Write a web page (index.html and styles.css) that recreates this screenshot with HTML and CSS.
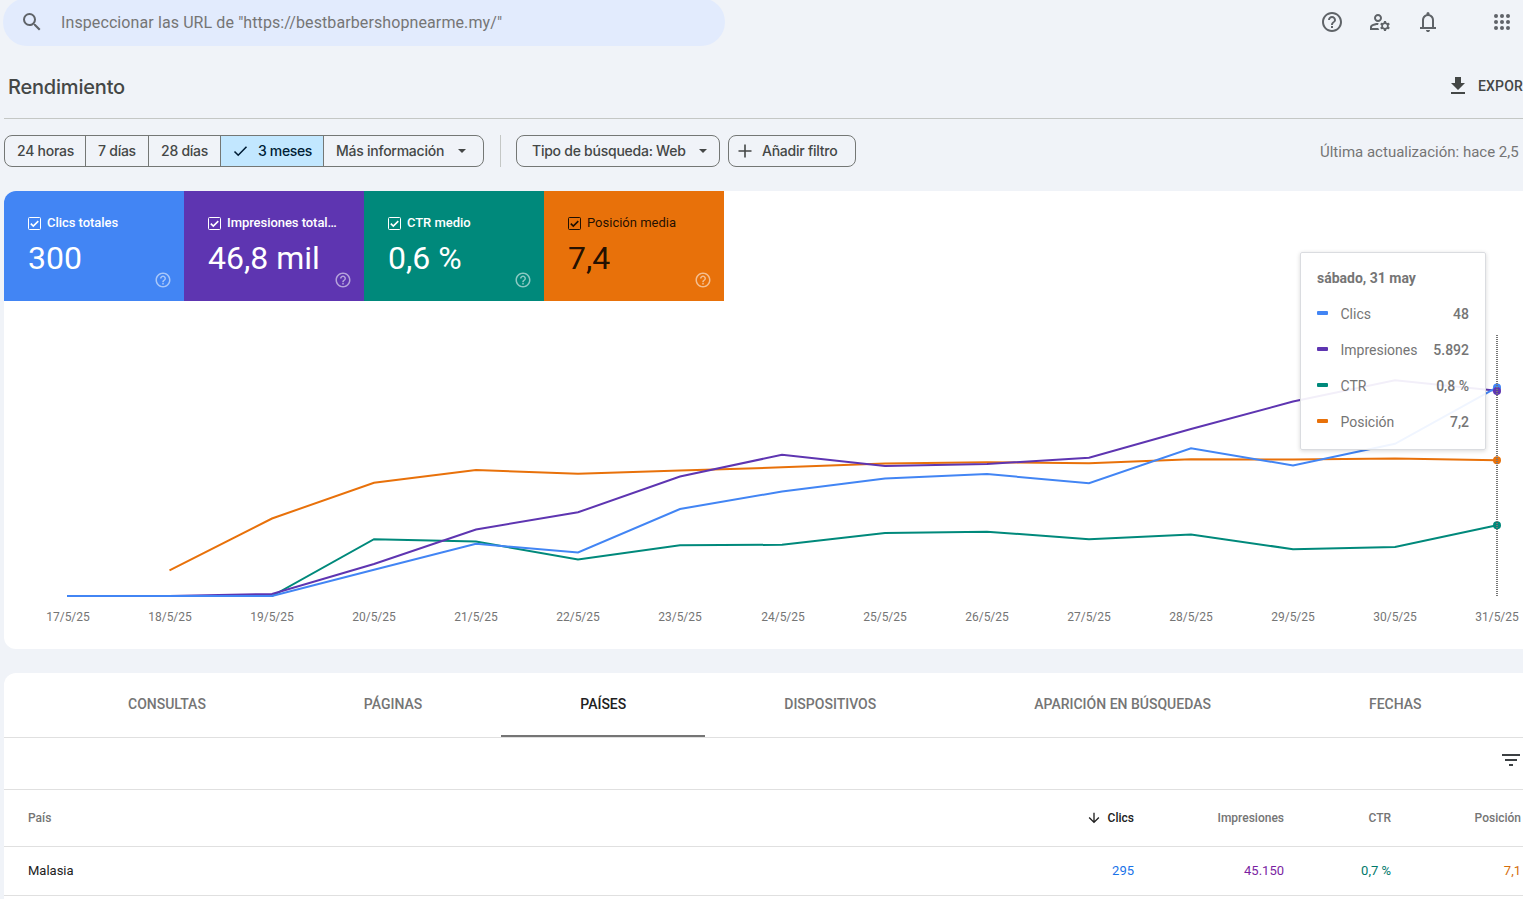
FILE: index.html
```html
<!DOCTYPE html>
<html lang="es">
<head>
<meta charset="utf-8">
<title>Rendimiento</title>
<link rel="stylesheet" href="styles.css">
</head>
<body>
<svg class="defs" aria-hidden="true">
  <symbol id="help" viewBox="0 0 24 24"><path d="M11 18h2v-2h-2v2zm1-16C6.48 2 2 6.48 2 12s4.48 10 10 10 10-4.48 10-10S17.52 2 12 2zm0 18c-4.41 0-8-3.59-8-8s3.59-8 8-8 8 3.59 8 8-3.59 8-8 8zm0-14c-2.21 0-4 1.79-4 4h2c0-1.1.9-2 2-2s2 .9 2 2c0 2-3 1.75-3 5h2c0-2.25 3-2.5 3-5 0-2.21-1.79-4-4-4z"/></symbol>
  <symbol id="box" viewBox="0 0 13 13"><rect x=".5" y=".5" width="12" height="12" rx="1" fill="none" stroke="currentColor"/><path d="M2.8 6.6l2.5 2.5 5-5" fill="none" stroke="currentColor" stroke-width="1.6"/></symbol>
</svg>
<header class="topbar">
  <div class="search">
    <svg class="icon" viewBox="0 0 24 24"><path d="M15.5 14h-.79l-.28-.27A6.471 6.471 0 0 0 16 9.5 6.5 6.5 0 1 0 9.5 16c1.61 0 3.09-.59 4.23-1.57l.27.28v.79l5 4.99L20.49 19l-4.99-5zm-6 0C7.01 14 5 11.99 5 9.5S7.01 5 9.5 5 14 7.01 14 9.5 11.99 14 9.5 14z"/></svg>
    <span class="search-text">Inspeccionar las URL de "https://bestbarbershopnearme.my/"</span>
  </div>
  <nav class="actions">
    <svg class="icon"><use href="#help"/></svg>
    <svg class="icon" viewBox="0 0 24 24"><path d="M4 18v-.65c0-.34.16-.66.41-.81C6.1 15.53 8.03 15 10 15c.03 0 .05 0 .08.01.1-.7.3-1.37.59-1.98-.22-.02-.44-.03-.67-.03-2.42 0-4.68.67-6.61 1.82-.88.52-1.39 1.5-1.39 2.53V20h9.26c-.42-.6-.75-1.28-.97-2H4zM10 12c2.21 0 4-1.79 4-4s-1.79-4-4-4-4 1.79-4 4 1.79 4 4 4zm0-6c1.1 0 2 .9 2 2s-.9 2-2 2-2-.9-2-2 .9-2 2-2zM20.75 16c0-.22-.03-.42-.06-.63l1.14-1.01-1-1.73-1.45.49c-.32-.27-.68-.48-1.08-.63L18 11h-2l-.3 1.49c-.4.15-.76.36-1.08.63l-1.45-.49-1 1.73 1.14 1.01c-.03.21-.06.41-.06.63s.03.42.06.63l-1.14 1.01 1 1.73 1.45-.49c.32.27.68.48 1.08.63L16 21h2l.3-1.49c.4-.15.76-.36 1.08-.63l1.45.49 1-1.73-1.14-1.01c.03-.21.06-.41.06-.63zM17 18c-1.1 0-2-.9-2-2s.9-2 2-2 2 .9 2 2-.9 2-2 2z"/></svg>
    <svg class="icon" viewBox="0 -960 960 960"><path d="M160-200v-80h80v-280q0-83 50-147.5T420-792v-28q0-25 17.500-42.500T480-880q25 0 42.500 17.500T540-820v28q80 20 130 84.500T720-560v280h80v80H160Zm320 120q-33 0-56.500-23.500T400-160h160q0 33-23.500 56.500T480-80ZM320-280h320v-280q0-66-47-113t-113-47q-66 0-113 47t-47 113v280Z"/></svg>
    <svg class="icon apps" viewBox="0 0 24 24"><circle cx="6" cy="6" r="2"/><circle cx="12" cy="6" r="2"/><circle cx="18" cy="6" r="2"/><circle cx="6" cy="12" r="2"/><circle cx="12" cy="12" r="2"/><circle cx="18" cy="12" r="2"/><circle cx="6" cy="18" r="2"/><circle cx="12" cy="18" r="2"/><circle cx="18" cy="18" r="2"/></svg>
  </nav>
</header>
<main class="page">
  <div class="title-row">
    <h1 class="title">Rendimiento</h1>
    <div class="export">
      <svg class="icon" viewBox="0 0 24 24"><path d="M19 9h-4V3H9v6H5l7 7 7-7zM5 18v2h14v-2H5z"/></svg>
      <span>EXPOR</span>
    </div>
  </div>
  <div class="filters">
    <div class="segments">
      <div class="seg seg-day">24 horas</div>
      <div class="seg seg-week">7 días</div>
      <div class="seg seg-month">28 días</div>
      <div class="seg seg-active"><svg class="check" viewBox="0 0 18 18"><path d="M2.500 9.500l3.700 3.700 8.300-8.400" fill="none" stroke="currentColor" stroke-width="1.600"/></svg>3 meses</div>
      <div class="seg seg-more">Más información<i class="caret"></i></div>
    </div>
    <div class="divider"></div>
    <div class="chip chip-type">Tipo de búsqueda: Web<i class="caret"></i></div>
    <div class="chip chip-add"><svg class="plus" viewBox="0 0 14 14"><path d="M7 .5v13M.5 7h13" stroke="currentColor" stroke-width="1.600"/></svg>Añadir filtro</div>
    <div class="updated">Última actualización: hace 2,5</div>
  </div>

  <section class="card chart-card">
    <div class="metrics">
      <div class="metric clicks"><div class="metric-name"><svg class="box"><use href="#box"/></svg>Clics totales</div><div class="metric-value">300</div><svg class="metric-help"><use href="#help"/></svg></div>
      <div class="metric impressions"><div class="metric-name"><svg class="box"><use href="#box"/></svg>Impresiones total…</div><div class="metric-value">46,8 mil</div><svg class="metric-help"><use href="#help"/></svg></div>
      <div class="metric ctr"><div class="metric-name"><svg class="box"><use href="#box"/></svg>CTR medio</div><div class="metric-value">0,6 %</div><svg class="metric-help"><use href="#help"/></svg></div>
      <div class="metric position"><div class="metric-name"><svg class="box"><use href="#box"/></svg>Posición media</div><div class="metric-value">7,4</div><svg class="metric-help"><use href="#help"/></svg></div>
    </div>
    <svg class="chart" viewBox="4 301 1519 348">
      <g fill="none" stroke-width="2">
        <path stroke="#e8710a" d="M169.500 570.300L272 518.500 374 482.700 476 470 578 473.800 680 470.600 782 467.300 885 463.400 987 462.300 1089 463.300 1191 459.200 1293 459.500 1395 458.600 1497 460.300"/>
        <path stroke="#00897b" d="M67 596H272L374 539.200 476 541.500 578 559.500 680 545.200 782 544.800 885 533 987 531.700 1089 539.200 1191 534.500 1293 549.200 1395 546.900 1497 525.200"/>
        <path stroke="#5e35b1" d="M67 596H169L272 594 374 564 476 529.500 578 512.300 680 476.500 782 454.800 885 466 987 464 1089 457.800 1191 429 1293 401.500 1395 380.300 1497 390.700"/>
        <path stroke="#4285f4" d="M67 596H272L374 569.800 476 543.700 578 552.500 680 509 782 491.500 885 478.500 987 474 1089 483.300 1191 448.200 1293 465.500 1395 443.800 1497 387.300"/>
      </g>
      <circle cx="1497" cy="387.500" r="4" fill="#4285f4"/>
      <circle cx="1497" cy="391" r="4" fill="#5e35b1"/>
      <circle cx="1497" cy="460.300" r="4" fill="#e8710a"/>
      <circle cx="1497" cy="525.200" r="4" fill="#00897b"/>
      <path d="M1497 335V596" stroke="#757575" stroke-width="2" stroke-dasharray="1 1"/>
      <g class="dates">
        <text x="68" y="621">17/5/25</text><text x="170" y="621">18/5/25</text><text x="272" y="621">19/5/25</text><text x="374" y="621">20/5/25</text><text x="476" y="621">21/5/25</text><text x="578" y="621">22/5/25</text><text x="680" y="621">23/5/25</text><text x="783" y="621">24/5/25</text><text x="885" y="621">25/5/25</text><text x="987" y="621">26/5/25</text><text x="1089" y="621">27/5/25</text><text x="1191" y="621">28/5/25</text><text x="1293" y="621">29/5/25</text><text x="1395" y="621">30/5/25</text><text x="1497" y="621">31/5/25</text>
      </g>
    </svg>
    <div class="tooltip">
      <div class="tip-title">sábado, 31 may</div>
      <div class="tip-row"><i class="dash clicks"></i>Clics<b>48</b></div>
      <div class="tip-row"><i class="dash impressions"></i>Impresiones<b>5.892</b></div>
      <div class="tip-row"><i class="dash ctr"></i>CTR<b>0,8 %</b></div>
      <div class="tip-row"><i class="dash position"></i>Posición<b>7,2</b></div>
    </div>
  </section>

  <section class="card table-card">
    <div class="tabs">
      <div class="tab">CONSULTAS</div>
      <div class="tab">PÁGINAS</div>
      <div class="tab tab-active">PAÍSES</div>
      <div class="tab">DISPOSITIVOS</div>
      <div class="tab">APARICIÓN EN BÚSQUEDAS</div>
      <div class="tab">FECHAS</div>
    </div>
    <div class="toolbar"><svg class="icon" viewBox="0 0 24 24"><path d="M10 18h4v-2h-4v2zM3 6v2h18V6H3zm3 7h12v-2H6v2z"/></svg></div>
    <div class="row head">
      <div>País</div>
      <div class="sorted"><svg class="arrow" viewBox="0 0 24 24"><path d="M20 12l-1.410-1.410L13 16.170V4h-2v12.170l-5.580-5.590L4 12l8 8 8-8z"/></svg>Clics</div>
      <div>Impresiones</div><div>CTR</div><div>Posición</div>
    </div>
    <div class="row data">
      <div>Malasia</div>
      <div class="v-clicks">295</div><div class="v-impressions">45.150</div><div class="v-ctr">0,7 %</div><div class="v-position">7,1</div>
    </div>
  </section>
</main>
</body>
</html>
```
FILE: styles.css
```css
* { box-sizing: border-box; }
body {
  margin: 0;
  height: 899px;
  overflow: hidden;
  background: #f0f3f8;
  font-family: Roboto, "Liberation Sans", sans-serif;
  color: #757575;
}
.defs { display: none; }
.icon { width: 24px; height: 24px; flex: none; fill: currentColor; }

.topbar { display: flex; justify-content: space-between; align-items: flex-end; height: 46px; padding-left: 3px; }
.search {
  display: flex; align-items: center; width: 722px; height: 48px; flex: none;
  padding: 0 17px; gap: 17px; border-radius: 24px; background: #e2ebfd; color: #5f6368;
}
.search-text { font-size: 16px; letter-spacing: .1px; color: #757575; }
.actions { display: flex; align-items: center; gap: 24px; height: 48px; padding-right: 9px; color: #5f6368; }
.apps { margin-left: 26px; }

.page { padding-left: 4px; }
.title-row {
  display: flex; justify-content: space-between; align-items: center;
  height: 73px; padding: 10px 0 0 4px; border-bottom: 1px solid #c4c7c5; color: #444746;
}
.title { margin: 0; font: 500 20px/24px Inter, sans-serif; letter-spacing: -0.2px; color: #444746; }
.export { display: flex; align-items: center; gap: 8px; width: 77px; flex: none; white-space: nowrap; font-size: 14px; font-weight: 500; letter-spacing: .15px; margin-top: -2px; }

.filters {
  display: flex; align-items: center; height: 72px; padding-bottom: 8px;
  font: 500 14px/20px Inter, sans-serif; letter-spacing: -.25px; color: #444746; white-space: nowrap;
}
.segments { display: flex; width: 480px; height: 32px; flex: none; border: 1px solid #747775; border-radius: 8px; overflow: hidden; }
.seg { display: flex; align-items: center; padding-left: 12px; border-right: 1px solid #747775; }
.seg-day { width: 81px; }
.seg-week { width: 63px; }
.seg-month { width: 72px; }
.seg-active { width: 103px; padding-left: 11px; gap: 8px; background: #c2e7ff; color: #001d35; letter-spacing: -.35px; }
.seg-more { flex: 1; border-right: 0; }
.check { width: 18px; height: 18px; }
.caret { margin-left: auto; border: 4.500px solid transparent; border-top-color: currentColor; border-bottom: 0; }
.seg-more .caret { margin-right: 17px; }
.divider { width: 1px; height: 32px; margin: 0 15px 0 16px; background: #c4c7c5; }
.chip { display: flex; align-items: center; height: 32px; flex: none; border: 1px solid #747775; border-radius: 8px; }
.chip-type { width: 204px; padding: 0 12px 0 15px; }
.chip-add { width: 128px; margin-left: 8px; padding-left: 9px; gap: 10px; }
.plus { width: 14px; height: 14px; }
.updated { width: 203px; flex: none; margin-left: auto; padding-top: 1px; font: 400 15px/20px Roboto, sans-serif; letter-spacing: 0; color: #757575; }

.card { background: #fff; border-radius: 12px 0 0 12px; }
.chart-card { position: relative; height: 458px; overflow: hidden; }
.clicks { background: #4285f4; }
.impressions { background: #5e35b1; }
.ctr { background: #00897b; }
.position { background: #e8710a; }
.metrics { display: flex; height: 110px; }
.metric { position: relative; width: 180px; padding: 23px 0 0 24px; color: #fff; }
.metric.position { color: rgba(0, 0, 0, .87); }
.metric-name { display: flex; align-items: center; gap: 6px; height: 16px; font-size: 13px; font-weight: 500; letter-spacing: -.05px; white-space: nowrap; }
.position .metric-name { font-weight: 400; letter-spacing: 0; }
.box { width: 13px; height: 13px; margin-top: 3px; }
.metric-value { margin-top: 9px; font-size: 32px; line-height: 38px; }
.metric-help { position: absolute; right: 12px; bottom: 12px; width: 18px; height: 18px; fill: #fff; opacity: .54; }
.chart { display: block; width: 1519px; height: 348px; }
.dates { font-size: 12px; fill: #757575; text-anchor: middle; }

.tooltip {
  position: absolute; left: 1296px; top: 61px; width: 186px; height: 198px;
  padding: 7px 16px; border: 1px solid #dadce0; border-radius: 2px;
  background: rgba(255, 255, 255, .92); box-shadow: 0 1px 4px rgba(0, 0, 0, .16); font-size: 14px;
}
.tip-title { line-height: 36px; font-weight: 700; }
.tip-row { display: flex; align-items: center; height: 36px; }
.tip-row b { margin-left: auto; font-weight: 500; }
.dash { width: 11px; height: 4px; margin: -2px 12.500px 0 0; border-radius: 1px; }

.table-card { margin-top: 24px; height: 250px; border-radius: 12px 0 0 0; }
.tabs { display: flex; height: 65px; padding-left: 45px; border-bottom: 1px solid #e0e0e0; font-size: 14px; font-weight: 500; }
.tab { flex: none; padding: 0 79px; line-height: 62px; white-space: nowrap; }
.tab-active { color: #212121; border-bottom: 2px solid #757575; }
.toolbar { display: flex; justify-content: flex-end; height: 52px; padding-top: 10px; border-bottom: 1px solid #e0e0e0; color: #3c4043; }
.row {
  display: grid; grid-template-columns: 1fr 150px 150px 107px 130px; align-items: center;
  padding: 0 2px 0 24px; border-bottom: 1px solid #e0e0e0; text-align: right;
}
.row > :first-child { text-align: left; }
.head { height: 57px; font-size: 12px; font-weight: 500; }
.data { height: 49px; padding-bottom: 2px; font-size: 13px; }
.data > :first-child { color: #212121; }
.sorted { display: flex; align-items: center; justify-content: flex-end; gap: 6px; color: #212121; }
.arrow { width: 16px; height: 16px; fill: currentColor; }
.v-clicks { color: #1a73e8; }
.v-impressions { color: #7b1fa2; }
.v-ctr { color: #00796b; }
.v-position { color: #d56e0c; }
```
